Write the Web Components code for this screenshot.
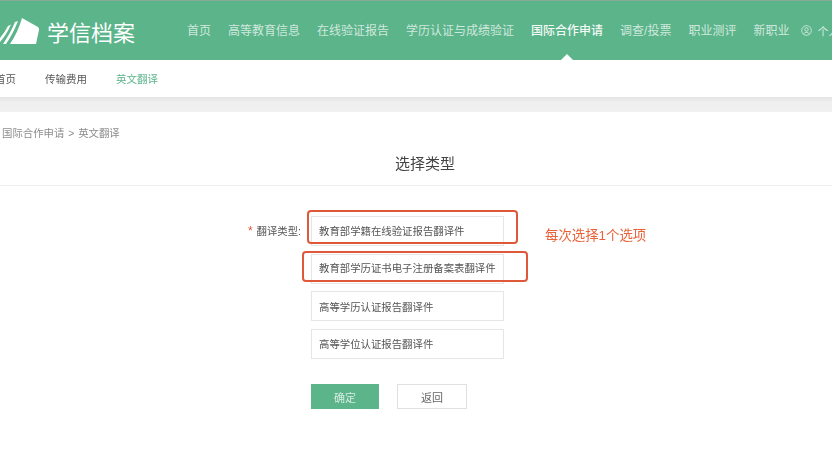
<!DOCTYPE html>
<html lang="zh-CN">
<head>
<meta charset="utf-8">
<title>英文翻译</title>
<style>
html, body { margin: 0; padding: 0; background: #fff; overflow: hidden; }
body { width: 832px; height: 462px; font-family: "Liberation Sans", "Noto Sans CJK SC", sans-serif; }
</style>
</head>
<body>
<xsxx-page>
	<xsxx-header>
		<nav-item>首页</nav-item>
		<nav-item>高等教育信息</nav-item>
		<nav-item>在线验证报告</nav-item>
		<nav-item>学历认证与成绩验证</nav-item>
		<nav-item active>国际合作申请</nav-item>
		<nav-item>调查/投票</nav-item>
		<nav-item>职业测评</nav-item>
		<nav-item>新职业</nav-item>
	</xsxx-header>
	<sub-nav>
		<sub-item>首页</sub-item>
		<sub-item>传输费用</sub-item>
		<sub-item active>英文翻译</sub-item>
	</sub-nav>
	<type-form></type-form>
</xsxx-page>

<script>
class XsxxPage extends HTMLElement {
	constructor() {
		super();
		this.attachShadow({mode: 'open'}).innerHTML = `
		<style>
		:host {
			display: block;
			width: 850px;
			height: 462px;
			color: #555;
			filter: blur(.35px);
		}
		</style>
		<slot></slot>`;
	}
}
customElements.define('xsxx-page', XsxxPage);

class XsxxHeader extends HTMLElement {
	constructor() {
		super();
		this.attachShadow({mode: 'open'}).innerHTML = `
		<style>
		:host {
			display: flex;
			align-items: center;
			height: 60px;
			box-sizing: border-box;
			background: #5bb48a;
			border-top: 1px solid #86ab98;
			overflow: hidden;
		}
		.logo {
			flex: none;
			display: flex;
			align-items: center;
			gap: 7px;
			width: 187px;
			color: #fff;
			font-size: 22px;
			box-sizing: border-box;
		}
		.logo svg { display: block; flex: none; margin-top: 2px; }
		nav { display: flex; gap: 17px; flex: none; }
		.me {
			flex: none;
			display: flex;
			align-items: center;
			gap: 5px;
			margin-left: 12px;
			font-size: 11px;
			white-space: nowrap;
			color: rgba(255,255,255,.78);
		}
		.me svg { display: block; flex: none; }
		</style>
		<div class="logo">
			<svg width="40" height="28" viewBox="0 0 40 28" fill="#fff">
				<path d="M22 0 L38 9 Q39.500 10.500 39 12 L36 26 L10 26 Q18 14 22 0 Z"/>
				<path d="M15 4 L18 3 Q13 16 6 26 L3 26 Q11 14 15 4 Z"/>
				<path d="M8 8 L11 6.500 Q7 16 0 24 L0 20 Q5 14 8 8 Z"/>
			</svg>
			<span>学信档案</span>
		</div>
		<nav><slot></slot></nav>
		<div class="me">
			<svg width="11" height="11" viewBox="0 0 11 11" fill="none" stroke="rgba(255,255,255,.8)" stroke-width=".8">
				<circle cx="5.500" cy="5.500" r="4.800"/>
				<circle cx="5.500" cy="4.500" r="1.700"/>
				<path d="M2.500 9 Q5.500 5.500 8.500 9"/>
			</svg>
			<span>个人中心</span>
		</div>`;
	}
}
customElements.define('xsxx-header', XsxxHeader);

class NavItem extends HTMLElement {
	constructor() {
		super();
		this.attachShadow({mode: 'open'}).innerHTML = `
		<style>
		:host {
			display: block;
			position: relative;
			font-size: 12px;
			line-height: 18px;
			white-space: nowrap;
			color: rgba(255,255,255,.72);
		}
		:host([active]) { color: rgba(255,255,255,.95); font-weight: 500; }
		.caret { display: none; }
		:host([active]) .caret {
			display: block;
			position: absolute;
			left: 50%;
			bottom: -20px;
			margin-left: -6px;
			border: 6px solid transparent;
			border-top: 0;
			border-bottom-color: #fff;
		}
		</style>
		<slot></slot><span class="caret"></span>`;
	}
}
customElements.define('nav-item', NavItem);

class SubNav extends HTMLElement {
	constructor() {
		super();
		this.attachShadow({mode: 'open'}).innerHTML = `
		<style>
		:host {
			display: flex;
			align-items: center;
			gap: 29px;
			height: 37px;
			margin-left: -5px;
			background: #fff;
		}
		</style>
		<slot></slot>`;
	}
}
customElements.define('sub-nav', SubNav);

class SubItem extends HTMLElement {
	constructor() {
		super();
		this.attachShadow({mode: 'open'}).innerHTML = `
		<style>
		:host { display: block; font-size: 10.500px; color: #555; white-space: nowrap; }
		:host([active]) { color: #5bb48a; }
		</style>
		<slot></slot>`;
	}
}
customElements.define('sub-item', SubItem);

class TypeOption extends HTMLElement {
	constructor() {
		super();
		this.attachShadow({mode: 'open'}).innerHTML = `
		<style>
		:host {
			display: flex;
			align-items: center;
			width: 193px;
			height: 30px;
			box-sizing: border-box;
			padding: 0 0 2px 7px;
			border: 1px solid #e6e6e6;
			background: #fff;
			font-size: 10.400px;
			color: #555;
			white-space: nowrap;
		}
		</style>
		<slot></slot>`;
	}
}
customElements.define('type-option', TypeOption);

class FormButton extends HTMLElement {
	constructor() {
		super();
		this.attachShadow({mode: 'open'}).innerHTML = `
		<style>
		:host {
			display: flex;
			align-items: center;
			justify-content: center;
			height: 25px;
			width: 70px;
			box-sizing: border-box;
			border: 1px solid #e0e0e0;
			background: #fff;
			color: #666;
			font-size: 11px;
		}
		:host([primary]) {
			width: 68px;
			border-color: #5bb48a;
			background: #5bb48a;
			color: rgba(255,255,255,.75);
		}
		</style>
		<slot></slot>`;
	}
}
customElements.define('form-button', FormButton);

class TypeForm extends HTMLElement {
	constructor() {
		super();
		this.attachShadow({mode: 'open'}).innerHTML = `
		<style>
		:host { display: block; position: relative; }
		.band {
			height: 15px;
			background: linear-gradient(#e4e4e4, #efefef 35%, #f0f0f0);
		}
		.crumb {
			padding: 15px 0 0 2px;
			font-size: 10.400px;
			line-height: 14px;
			word-spacing: 1px;
			color: #8c8c8c;
		}
		h2 {
			display: flex;
			align-items: center;
			justify-content: center;
			height: 42px;
			margin: 0;
			padding-bottom: 2px;
			border-bottom: 1px solid #eee;
			font-size: 15px;
			font-weight: 400;
			color: #444;
		}
		.grid {
			display: grid;
			grid-template-columns: 301px 193px;
			grid-auto-rows: 30px;
			column-gap: 10px;
			row-gap: 7.500px;
			padding-top: 30px;
		}
		label {
			grid-row: 1;
			height: 30px;
			font-size: 10.400px;
			line-height: 31px;
			word-spacing: 1px;
			text-align: right;
			color: #555;
		}
		label b { color: #e0533d; font-weight: 400; font-size: 12px; }
		type-option { grid-column: 2; }
		type-option:nth-of-type(n+3) { padding-bottom: 0; }
		.buttons {
			grid-column: 2;
			display: flex;
			gap: 18px;
			margin-top: 18px;
		}
		.mark {
			position: absolute;
			box-sizing: border-box;
			border: 2px solid #e0583a;
			border-radius: 4px;
		}
		.mark.one { left: 307px; top: 113px; width: 211px; height: 34px; }
		.mark.two { left: 302px; top: 154px; width: 226px; height: 31px; }
		.note {
			position: absolute;
			left: 545px;
			top: 130px;
			font-size: 13.400px;
			line-height: 18px;
			color: #e8623a;
			white-space: nowrap;
		}
		</style>
		<div class="band"></div>
		<div class="crumb">国际合作申请 &gt; 英文翻译</div>
		<h2>选择类型</h2>
		<div class="grid">
			<label><b>*</b> 翻译类型:</label>
			<type-option>教育部学籍在线验证报告翻译件</type-option>
			<type-option>教育部学历证书电子注册备案表翻译件</type-option>
			<type-option>高等学历认证报告翻译件</type-option>
			<type-option>高等学位认证报告翻译件</type-option>
			<div class="buttons">
				<form-button primary>确定</form-button>
				<form-button>返回</form-button>
			</div>
		</div>
		<div class="mark one"></div>
		<div class="mark two"></div>
		<div class="note">每次选择1个选项</div>`;
	}
}
customElements.define('type-form', TypeForm);
</script>
</body>
</html>
